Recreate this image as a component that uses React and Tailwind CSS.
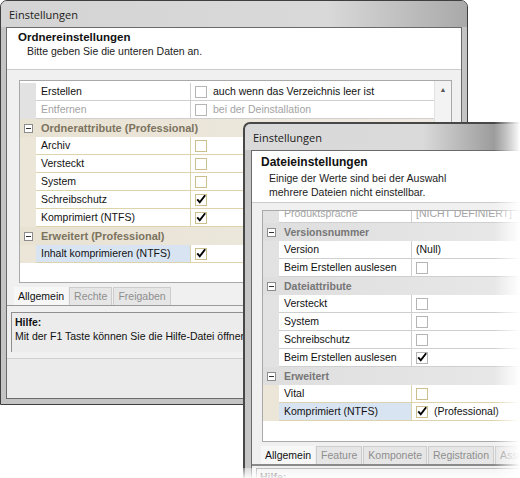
import React from 'react';

const ui = "font-['Liberation_Sans',Arial,sans-serif]";

const Check = ({ checked, tan }) => (
    <span
        className={`w-[12px] h-[12px] border bg-white flex items-center justify-center shrink-0 ${
            tan ? 'border-[#cbbf8e]' : 'border-[#b5b5b5]'
        }`}
    >
        {checked && (
            <svg width="12" height="12" viewBox="0 0 12 12" className="-mt-[2px]">
                <path d="M1.5 6.5 L4.5 10 L11 1.5" fill="none" stroke="#000" strokeWidth="2.3" />
            </svg>
        )}
    </span>
);

const Minus = () => (
    <span className="w-[9px] h-[9px] border border-[#8c8c8c] bg-white flex items-center justify-center">
        <span className="w-[5px] h-px bg-[#333]" />
    </span>
);

const Category = ({ text, tan }) => (
    <div
        className={`h-[18px] flex items-center shrink-0 ${
            tan ? 'bg-gradient-to-r from-[#e8e2d3] to-[#efebe2]' : 'bg-gradient-to-r from-[#dedede] to-[#e9e9e9]'
        }`}
    >
        <div className="w-[16px] flex justify-center">
            <Minus />
        </div>
        <span className={`pl-[5px] font-bold ${tan ? 'text-[11px] text-[#7c735e]' : 'text-[#767676]'}`}>{text}</span>
    </div>
);

const Row = ({ label, value, check, checked, tan, selected, disabled, labelW }) => {
    const line = tan ? 'border-[#ddd3ad]' : 'border-[#cfcfcf]';
    return (
        <div className="h-[18px] flex shrink-0">
            <div className={`w-[16px] ${tan ? 'bg-[#ebe6d8]' : 'bg-[#e2e2e2]'}`} />
            <div
                className={`${labelW} border-b border-r ${line} pl-[5px] flex items-center ${
                    selected ? 'bg-[#d9e4f2]' : 'bg-white'
                } ${disabled ? 'text-[#a3a3a3]' : 'text-[#111]'}`}
            >
                {label}
            </div>
            <div className={`flex-1 border-b ${line} bg-white pl-[4px] flex items-center gap-[6px] whitespace-nowrap ${disabled ? 'text-[#a3a3a3]' : 'text-[#111]'}`}>
                {check && <Check checked={checked} tan={tan} />}
                {value && <span>{value}</span>}
            </div>
        </div>
    );
};

const Tabs = ({ items }) => (
    <div className="flex h-[18px]">
        {items.map((t, i) => (
            <div
                key={t}
                className={`px-[4px] flex items-center whitespace-nowrap ${
                    i === 0
                        ? 'bg-[#f7f7f7] text-[#111]'
                        : 'bg-[#e6e6e6] text-[#8e8e8e] border border-[#cdcdcd] border-b-0 ml-px'
                }`}
            >
                {t}
            </div>
        ))}
    </div>
);

const TitleBar = ({ dark }) => (
    <div
        className={`h-[26px] shrink-0 flex items-center pl-[8px] text-[11px] text-[#1b1b1b] font-['Open_Sans',sans-serif] rounded-t-[6px] ${
            dark
                ? 'bg-[linear-gradient(90deg,#d9d9d9_0%,#dadada_60%,#9a9a9a_85%,#6e6e6e_100%)]'
                : 'bg-[linear-gradient(90deg,#d4d4d4_0%,#d9d9d9_70%,#a9a9a9_100%)]'
        }`}
    >
        Einstellungen
    </div>
);

function BackWindow() {
    const lw = 'w-[155px]';
    return (
        <div className="absolute left-0 top-0 w-[468px] h-[405px] border border-[#3f3f3f] rounded-t-[7px] bg-[#c4c4c4] flex flex-col">
            <TitleBar />
            <div className="mx-[5px] mb-[5px] flex-1 border border-[#6a6a6a] flex flex-col">
                <div className="h-[42px] shrink-0 bg-white border-b border-[#cbcbcb] pl-[11px] pt-[4px]">
                    <div className="font-bold text-[11.5px] text-[#111]">Ordnereinstellungen</div>
                    <div className="pl-[9px] text-[#222] mt-[2px]">Bitte geben Sie die unteren Daten an.</div>
                </div>
                <div className="flex-1 bg-[#f0f0f0] flex flex-col">
                    <div className="mt-[10px] ml-[12px] w-[433px] h-[203px] shrink-0 border border-[#a9a9a9] bg-white flex">
                        <div className="flex-1 flex flex-col pt-[2px] bg-white">
                            <Row label="Erstellen" check value="auch wenn das Verzeichnis leer ist" labelW={lw} />
                            <Row label="Entfernen" check value="bei der Deinstallation" disabled labelW={lw} />
                            <Category text="Ordnerattribute (Professional)" tan />
                            <Row label="Archiv" check tan labelW={lw} />
                            <Row label="Versteckt" check tan labelW={lw} />
                            <Row label="System" check tan labelW={lw} />
                            <Row label="Schreibschutz" check checked tan labelW={lw} />
                            <Row label="Komprimiert (NTFS)" check checked tan labelW={lw} />
                            <Category text="Erweitert (Professional)" tan />
                            <Row label="Inhalt komprimieren (NTFS)" check checked tan selected labelW={lw} />
                        </div>
                        <div className="w-[17px] bg-[#f3f3f3] border-l border-[#e2e2e2] flex flex-col">
                            <div className="h-[17px] flex items-center justify-center text-[#555] text-[7px]">▲</div>
                        </div>
                    </div>
                    <div className="mt-[4px] ml-[7px]">
                        <Tabs items={['Allgemein', 'Rechte', 'Freigaben']} />
                    </div>
                    <div className="border-t border-[#9a9a9a]" />
                    <div className="mt-[6px] ml-[4px] h-[40px] shrink-0 border-t border-l border-[#8f8f8f] bg-[#ececec] pl-[3px] pt-[2px] leading-[14px]">
                        <div className="font-bold text-[#111]">Hilfe:</div>
                        <div className="text-[#111]">Mit der F1 Taste können Sie die Hilfe-Datei öffnen.</div>
                    </div>
                    <div className="mt-[6px] flex-1 border-t border-[#d0d0d0] bg-[#ebebeb]" />
                </div>
            </div>
        </div>
    );
}

function FrontWindow() {
    const lw = 'w-[133px]';
    return (
        <div className="absolute left-[243px] top-[122px] w-[300px] h-[390px] border-2 border-[#474747] rounded-t-[7px] bg-[#c6c6c6] flex flex-col">
            <TitleBar dark />
            <div className="ml-[6px] flex-1 border border-[#6a6a6a] flex flex-col">
                <div className="h-[52px] shrink-0 bg-white border-b border-[#cbcbcb] pl-[9px] pt-[4px] leading-[14px]">
                    <div className="font-bold text-[12px] text-[#111] mb-[2px]">Dateieinstellungen</div>
                    <div className="pl-[8px] text-[#222]">Einige der Werte sind bei der Auswahl</div>
                    <div className="pl-[8px] text-[#222]">mehrere Dateien nicht einstellbar.</div>
                </div>
                <div className="flex-1 bg-[#f0f0f0] flex flex-col">
                    <div className="mt-[7px] ml-[10px] h-[232px] shrink-0 border border-[#a9a9a9] bg-white flex flex-col overflow-hidden">
                        <div className="-mt-[6px]">
                            <Row label="Produktsprache" value="[NICHT DEFINIERT]" disabled labelW={lw} />
                        </div>
                        <Category text="Versionsnummer" />
                        <Row label="Version" value="(Null)" labelW={lw} />
                        <Row label="Beim Erstellen auslesen" check labelW={lw} />
                        <Category text="Dateiattribute" />
                        <Row label="Versteckt" check labelW={lw} />
                        <Row label="System" check labelW={lw} />
                        <Row label="Schreibschutz" check labelW={lw} />
                        <Row label="Beim Erstellen auslesen" check checked labelW={lw} />
                        <Category text="Erweitert" />
                        <Row label="Vital" check tan labelW={lw} />
                        <Row label="Komprimiert (NTFS)" check checked tan selected value="(Professional)" labelW={lw} />
                    </div>
                    <div className="mt-[4px] ml-[9px]">
                        <Tabs items={['Allgemein', 'Feature', 'Komponete', 'Registration', 'Assembly']} />
                    </div>
                    <div className="border-t-2 border-[#8a8a8a]" />
                    <div className="mt-[2px] ml-[4px] h-[30px] shrink-0 border-t border-l border-[#8f8f8f] bg-[#ececec] pl-[3px] pt-[3px]">
                        <div className="font-bold text-[#111]">Hilfe:</div>
                    </div>
                </div>
            </div>
        </div>
    );
}

export default function App() {
    return (
        <div className={`relative w-[520px] h-[478px] overflow-hidden bg-white text-[10.5px] leading-none ${ui}`}>
            <BackWindow />
            <FrontWindow />
            <div className="absolute left-[494px] top-[118px] w-[26px] h-[360px] bg-gradient-to-r from-white/0 to-white" />
            <div className="absolute left-[240px] top-[468px] w-[280px] h-[10px] bg-gradient-to-b from-white/40 to-white/90" />
        </div>
    );
}
